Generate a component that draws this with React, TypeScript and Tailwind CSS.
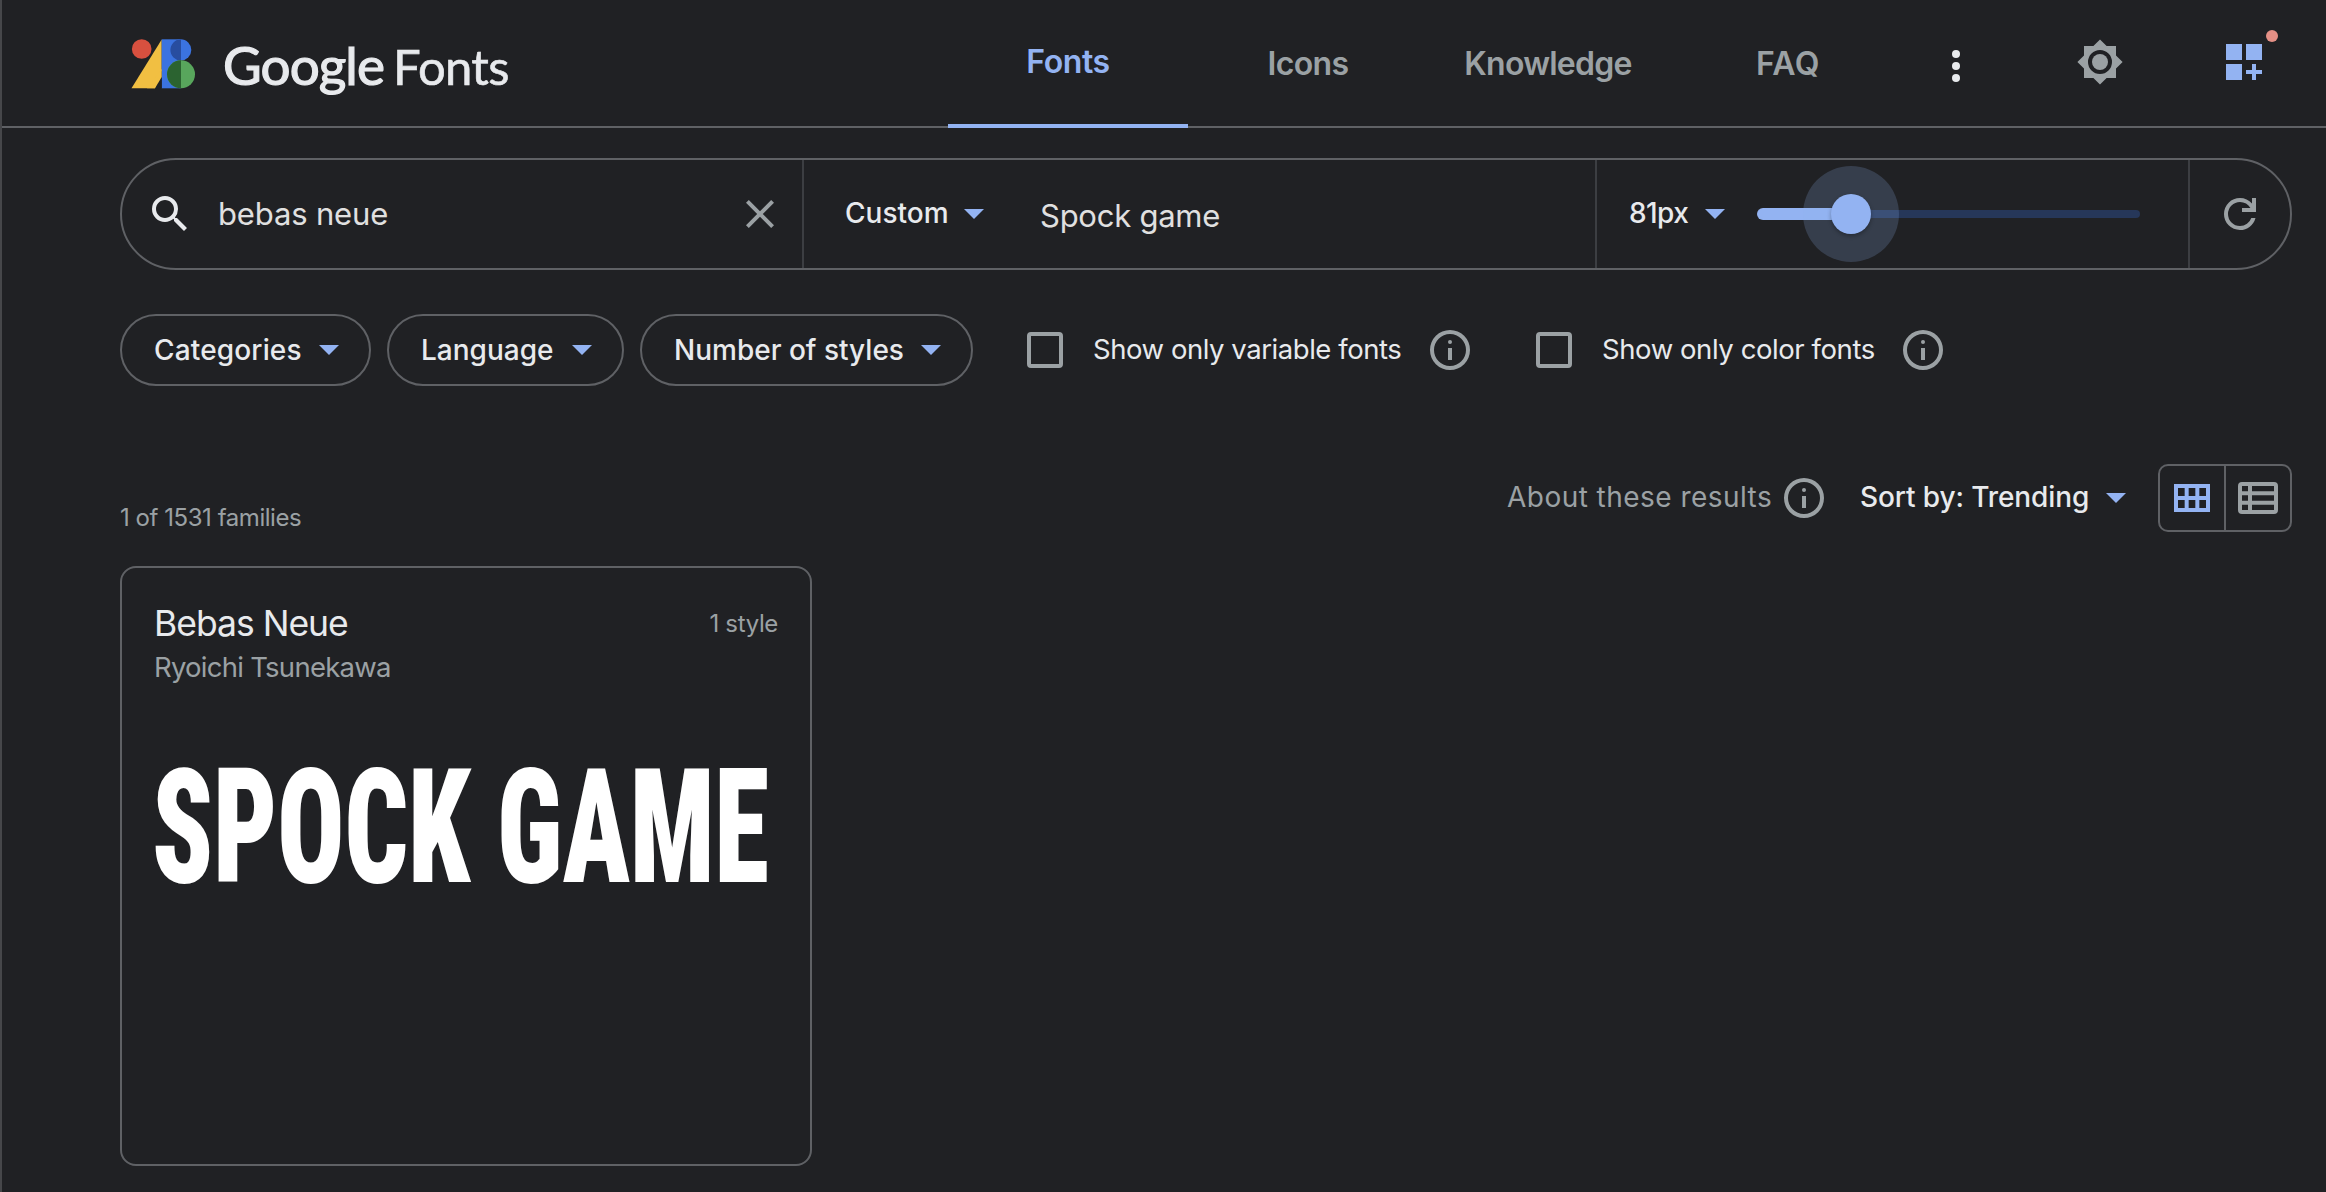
import React from "react";

const Arrow = () => (
  <svg width="20" height="10" viewBox="0 0 20 10" className="shrink-0" fill="#93b3f2">
    <path d="M0 0h20L10 10z" />
  </svg>
);

const Info = () => (
  <svg width="48" height="48" viewBox="0 0 24 24" className="shrink-0" fill="#9ba1a4">
    <path
      fillRule="evenodd"
      d="M12 2a10 10 0 1 0 0 20 10 10 0 0 0 0-20zm0 2a8 8 0 1 1 0 16 8 8 0 0 1 0-16z"
    />
    <path d="M11 11h2v6h-2z" />
    <circle cx="12" cy="8" r="1" />
  </svg>
);

const Logo = () => (
  <svg width="64" height="50" viewBox="0 0 64 50" className="shrink-0">
    <circle cx="10.7" cy="10" r="9.8" fill="#d8503f" />
    <path d="M30.7 0.5V31L24 49.3H0.5z" fill="#f1bf42" />
    <path d="M30.7 0.3H49.5V49.3H30.7z" fill="#3b73e0" />
    <path d="M30.7 37.5L24 49.3h6.7z" fill="#202124" />
    <path d="M30.7 30v8L24 49.3H16z" fill="#f1bf42" />
    <circle cx="49.7" cy="10.9" r="10.6" fill="#3b73e0" />
    <path d="M50 0.3v21.2a10.6 10.6 0 0 1 0-21.2z" fill="#284da0" />
    <circle cx="50" cy="35.3" r="14" fill="#58a65c" />
    <path d="M50 21.3v28a14 14 0 0 1 0-28z" fill="#2b6330" />
  </svg>
);

const Chip = ({ label, box, text }: { label: string; box: string; text: string }) => (
  <button
    className={`flex h-[72px] items-center justify-between rounded-full border-2 border-[#5f6165] pr-[30px] pl-[32px] ${box}`}
  >
    <span className={`pb-[1px] text-[28px] font-medium whitespace-nowrap ${text}`}>{label}</span>
    <Arrow />
  </button>
);

const Checkbox = () => <span className="size-9 shrink-0 rounded-[4px] border-4 border-[#9ba1a4]" />;

export default function App() {
  return (
    <div className="h-[1192px] w-[2326px] overflow-hidden border-l-2 border-[#46474a] bg-[#202124] font-['Inter',sans-serif] text-[#e8eaed]">
      <header className="-ml-[2px] flex h-32 items-stretch shadow-[inset_0_-2px_0_#5f6165]">
        <div className="flex items-center pl-[131px]">
          <Logo />
          <div className="ml-[28px] flex items-baseline pt-[2px] font-['Lato',sans-serif] leading-[60px] text-[#e8eaed] [-webkit-text-stroke:0.6px_#e8eaed]">
            <span className="w-[170px] text-[53px] tracking-[-0.9px] [-webkit-text-stroke:1.2px_#e8eaed]">Google</span>
            <span className="text-[49px] tracking-[-0.7px]">Fonts</span>
          </div>
        </div>
        <nav className="ml-auto flex items-stretch pr-[10px] text-[32px] font-[560] text-[#9ba1a4]">
          <a className="flex w-[240px] items-center justify-center border-b-4 border-[#93b3f2] tracking-[-0.4px] text-[#93b3f2]">
            Fonts
          </a>
          <a className="flex w-[240px] items-center justify-center tracking-[-0.65px]">Icons</a>
          <a className="flex w-[240px] items-center justify-center tracking-[-0.75px]">Knowledge</a>
          <a className="flex w-[240px] items-center justify-center tracking-[0.4px]">FAQ</a>
          <button className="flex w-24 items-center justify-center pt-1">
            <svg width="8" height="32" viewBox="0 0 8 32" fill="#e8eaed">
              <circle cx="4" cy="4" r="4" />
              <circle cx="4" cy="16" r="4" />
              <circle cx="4" cy="28" r="4" />
            </svg>
          </button>
          <button className="ml-6 flex w-36 items-center justify-center pb-1">
            <svg width="48" height="48" viewBox="0 0 24 24" fill="#9ba1a4">
              <path
                fillRule="evenodd"
                d="M20 15.31L23.31 12 20 8.69V4h-4.69L12 .69 8.69 4H4v4.69L.69 12 4 15.31V20h4.69L12 23.31 15.31 20H20zM12 18a6 6 0 1 1 0-12 6 6 0 0 1 0 12z"
              />
              <circle cx="12" cy="12" r="4" />
            </svg>
          </button>
          <button className="flex w-36 items-center justify-center pb-1">
            <span className="relative">
              <svg width="36" height="36" viewBox="0 0 36 36" fill="#93b3f2">
                <path d="M0 0h16v16H0zM20 0h16v16H20zM0 20h16v16H0zM26 20h4v6h6v4h-6v6h-4v-6h-6v-4h6z" />
              </svg>
              <span className="absolute -top-[14px] -right-4 size-3 rounded-full bg-[#e59086]" />
            </span>
          </button>
        </nav>
      </header>

      <main className="pl-[118px]">
        <section className="mt-[30px] flex h-28 w-[2172px] items-stretch rounded-full border-2 border-[#5f6165]">
          <div className="flex w-[682px] items-center border-r-2 border-[#3c3e42] pr-[18px] pl-6">
            <svg width="48" height="48" viewBox="0 0 24 24" fill="#e8eaed">
              <path d="M15.5 14h-.79l-.28-.27A6.471 6.471 0 0 0 16 9.5 6.5 6.5 0 1 0 9.5 16c1.61 0 3.09-.59 4.23-1.57l.27.28v.79l5 4.99L20.49 19l-4.99-5zm-6 0C7.01 14 5 11.99 5 9.5S7.01 5 9.5 5 14 7.01 14 9.5 11.99 14 9.5 14z" />
            </svg>
            <span className="ml-[24px] text-[31px] tracking-[-0.15px] text-[#e0e0e0]">bebas neue</span>
            <svg width="48" height="48" viewBox="0 0 24 24" fill="#9ba1a4" className="ml-auto">
              <path d="M19 6.41L17.59 5 12 10.59 6.41 5 5 6.41 10.59 12 5 17.59 6.41 19 12 13.41 17.59 19 19 17.59 13.41 12z" />
            </svg>
          </div>
          <div className="flex w-[793px] items-center border-r-2 border-[#3c3e42] pl-[41px]">
            <span className="w-[119px] pb-[2px] text-[28px] font-medium">Custom</span>
            <Arrow />
            <span className="ml-[56px] pt-1 text-[31px] tracking-[-0.25px] text-[#e0e0e0]">Spock game</span>
          </div>
          <div className="flex w-[593px] items-center border-r-2 border-[#3c3e42] pl-[32px]">
            <span className="w-[76px] pb-[2px] text-[28px] font-medium tracking-[-0.6px]">81px</span>
            <Arrow />
            <div className="relative ml-[32px] flex h-3 w-[383px] items-center">
              <span className="h-3 w-[95px] rounded-l-full bg-[#93b3f2]" />
              <span className="h-2 flex-1 rounded-r-[4px] bg-[#263759]" />
              <span className="absolute top-[-42px] left-[46px] flex size-24 items-center justify-center rounded-full bg-[#93b3f2]/20">
                <span className="size-10 rounded-full bg-[#93b3f2] shadow-[0_2px_4px_rgba(0,0,0,0.3)]" />
              </span>
            </div>
          </div>
          <div className="flex w-[100px] items-center justify-center">
            <svg width="48" height="48" viewBox="0 -960 960 960" fill="#9ba1a4">
              <path d="M480-160q-134 0-227-93t-93-227q0-134 93-227t227-93q69 0 132 28.5T720-690v-110h80v280H520v-80h168q-32-56-87.5-88T480-720q-100 0-170 70t-70 170q0 100 70 170t170 70q77 0 139-44t87-116h84q-28 106-114 173t-196 67Z" />
            </svg>
          </div>
        </section>

        <section className="mt-11 flex h-[72px] items-center">
          <Chip label="Categories" box="w-[251px]" text="tracking-[0.15px]" />
          <Chip label="Language" box="ml-4 w-[237px]" text="" />
          <Chip label="Number of styles" box="ml-4 w-[333px]" text="" />
          <label className="ml-[54px] flex items-center">
            <Checkbox />
            <span className="ml-[30px] w-[333px] pb-[1px] text-[27.5px] tracking-[-0.45px] whitespace-nowrap">
              Show only variable fonts
            </span>
            <Info />
          </label>
          <label className="ml-[62px] flex items-center">
            <Checkbox />
            <span className="ml-[30px] w-[297px] pb-[1px] text-[27.5px] tracking-[-0.42px] whitespace-nowrap">
              Show only color fonts
            </span>
            <Info />
          </label>
        </section>

        <section className="mt-[78px] flex h-[68px] w-[2172px] items-center">
          <span className="pt-[39px] text-[24px] tracking-[-0.45px] text-[#9ba1a4]">1 of 1531 families</span>
          <div className="ml-auto flex items-center">
            <span className="w-[273px] pb-[2px] text-[28px] tracking-[0.46px] whitespace-nowrap text-[#9ba1a4]">
              About these results
            </span>
            <Info />
            <span className="ml-[32px] w-[246px] pb-[2px] text-[28px] font-medium tracking-[-0.1px] whitespace-nowrap">
              Sort by: Trending
            </span>
            <Arrow />
            <div className="ml-8 flex h-[68px] w-[134px] rounded-[10px] border-2 border-[#5f6165]">
              <button className="flex w-[66px] items-center justify-center border-r-2 border-[#5f6165]">
                <svg width="36" height="28" viewBox="0 0 36 28" fill="#93b3f2">
                  <path
                    fillRule="evenodd"
                    d="M0 0h36v28H0zM4 4v8h6.67V4zM14.67 4v8h6.66V4zM25.33 4v8H32V4zM4 16v8h6.67v-8zM14.67 16v8h6.66v-8zM25.33 16v8H32v-8z"
                  />
                </svg>
              </button>
              <button className="flex w-16 items-center justify-center">
                <svg width="40" height="32" viewBox="0 0 40 32" fill="#9ba1a4">
                  <path
                    fillRule="evenodd"
                    d="M4 0h32a4 4 0 0 1 4 4v24a4 4 0 0 1-4 4H4a4 4 0 0 1-4-4V4a4 4 0 0 1 4-4zM4 4v5.33h6V4zM14 4v5.33h22V4zM4 13.33v5.34h6v-5.34zM14 13.33v5.34h22v-5.34zM4 22.67V28h6v-5.33zM14 22.67V28h22v-5.33z"
                  />
                </svg>
              </button>
            </div>
          </div>
        </section>

        <article className="mt-[34px] h-[600px] w-[692px] rounded-2xl border-2 border-[#5f6165] pt-[31px] pr-[32px] pl-[32px]">
          <div className="flex items-center justify-between leading-[48px]">
            <h2 className="pt-px text-[35.5px] leading-[47px] tracking-[-1px]">Bebas Neue</h2>
            <span className="pt-px text-[24px] leading-[47px] tracking-[-0.35px] text-[#9ba1a4]">1 style</span>
          </div>
          <p className="text-[27.5px] leading-[40px] tracking-[-0.75px] text-[#9ba1a4]">Ryoichi Tsunekawa</p>
          <div className="mt-[61px] flex h-40 gap-[31px] font-['Roboto',sans-serif] text-[160px] leading-[160px] font-black text-white [font-stretch:75%]">
            <span className="-ml-[2px] block w-[314px] origin-left scale-x-[0.696]">SPOCK</span>
            <span className="block w-[268px] origin-left scale-x-[0.695]">GAME</span>
          </div>
        </article>
      </main>
    </div>
  );
}
